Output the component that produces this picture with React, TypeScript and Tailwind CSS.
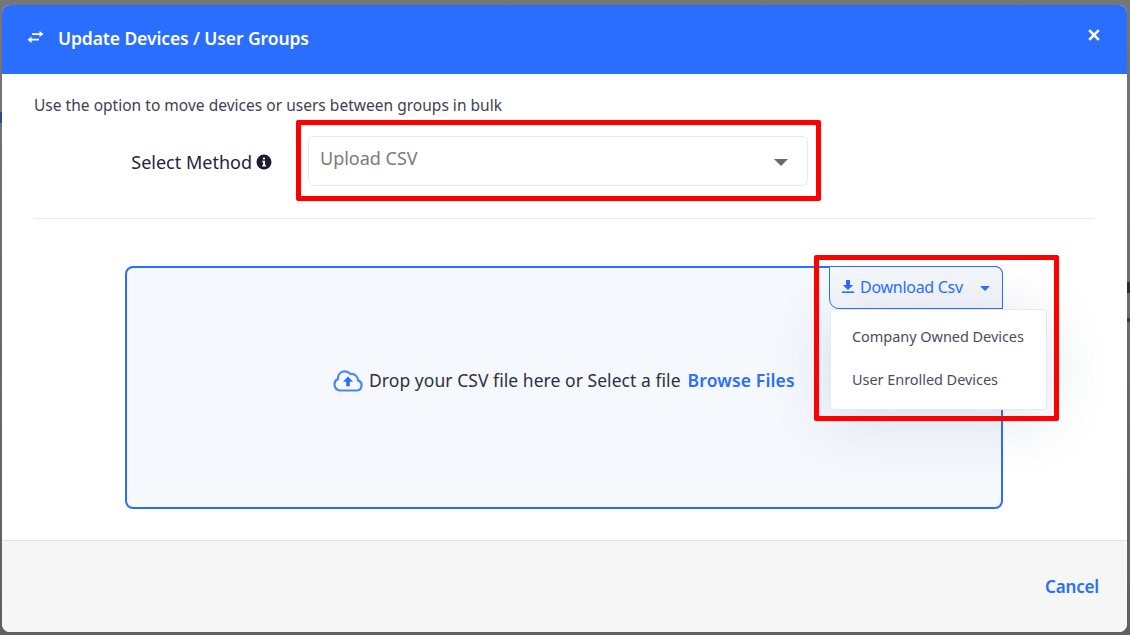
const font = { fontFamily: '"Noto Sans", sans-serif' }

function SwapIcon() {
  return (
    <svg width="17" height="12" viewBox="0 0 17 12" className="text-white">
      <path d="M5 2.2h7.5V0L16.5 3l-4 3V3.9H5z" fill="currentColor" />
      <path d="M12 7.8H4.5V5.6L0.5 8.8l4 3.2V9.6H12z" fill="currentColor" />
    </svg>
  )
}

function CloseIcon() {
  return (
    <svg width="12" height="12" viewBox="0 0 12 12">
      <path d="M1.2 1.2l9.6 9.6M10.8 1.2l-9.6 9.6" stroke="white" strokeWidth="2.6" fill="none" />
    </svg>
  )
}

function CloudIcon() {
  return (
    <svg width="30" height="22" viewBox="0 0 30 22">
      <path
        d="M7 20.5h16.5a5.2 5.2 0 0 0 1.6-10.1A6.6 6.6 0 0 0 17.5 4 8 8 0 0 0 10 1.5a7.2 7.2 0 0 0-5 7.6A6 6 0 0 0 7 20.5z"
        fill="none"
        stroke="#4a86f7"
        strokeWidth="2.2"
      />
      <path d="M15 6.5l5 5.2h-3.2v4.6h-3.6v-4.6H10z" fill="#2a6eff" />
    </svg>
  )
}

function InfoDot() {
  return (
    <svg width="16" height="16" viewBox="0 0 16 16">
      <circle cx="8" cy="8" r="7.5" fill="#1c1c2e" />
      <rect x="6.9" y="3.4" width="2.2" height="2.2" rx="1" fill="white" />
      <path d="M6.3 6.8h2.8v4.4h1v1.4H6.1v-1.4h1V8.2h-.8z" fill="white" />
    </svg>
  )
}

function DownloadIcon() {
  return (
    <svg width="14" height="14" viewBox="0 0 14 14">
      <path d="M5 0h4v5h3.2L7 10 1.8 5H5z" fill="#2a6eff" />
      <rect x="1" y="11.4" width="12" height="1.6" fill="#2a6eff" />
    </svg>
  )
}

function Caret({ className }: { className: string }) {
  return (
    <svg width="14" height="7" viewBox="0 0 14 7" className={className}>
      <path d="M0 0h14L7 7z" fill="currentColor" />
    </svg>
  )
}

export default function App() {
  return (
    <div style={font} className="relative w-[1130px] h-[635px] overflow-hidden bg-gradient-to-b from-[#767676] to-[#606060] pt-[5px] pl-[2px]">
      {/* bits of the page behind the modal, only visible at the edges */}
      <div className="absolute left-0 top-[112px] w-[2px] h-[11px] bg-[#2b4a86]" />
      <div className="absolute right-0 top-[282px] w-[3px] h-[11px] bg-[#2c2c2c]" />
      <div className="absolute right-0 top-[318px] w-[3px] h-[4px] bg-[#3a3a3a]" />

      <div className="relative w-[1125px] h-[627px] flex flex-col rounded-[8px] overflow-hidden bg-white">
        <div className="h-[69px] shrink-0 bg-[#2a6eff] flex items-center pl-[25px] pr-[27px] text-white">
          <span className="mb-[6px]">
            <SwapIcon />
          </span>
          <h1 className="ml-[14px] mb-[2px] text-[17.5px] font-semibold tracking-[-0.1px]">Update Devices / User Groups</h1>
          <div className="ml-auto mb-[10px]">
            <CloseIcon />
          </div>
        </div>

        <div className="flex-1 pl-[32px] pr-[33px] pt-[20px]">
          <p className="text-[15.5px] leading-[22px] tracking-[0.02px] text-[#3f4150]">
            Use the option to move devices or users between groups in bulk
          </p>
          <div className="flex items-start mt-[20px] pb-[32px] border-b border-[#e8e8e8]">
            <div className="w-[274px] h-[50px] flex items-center justify-end pr-[36px] pt-[2px]">
              <span className="text-[18px] text-[#23243a]">Select Method</span>
              <span className="ml-[4px]">
                <InfoDot />
              </span>
            </div>
            <div className="w-[500px] h-[50px] rounded-[6px] border border-[#e3e9f5] flex items-center justify-between pl-[11px] pr-[19px] pb-[5px]">
              <span className="text-[18px] text-[#7b7b7b]">Upload CSV</span>
              <Caret className="text-[#6b6b6b] mt-[7px]" />
            </div>
          </div>

          <div className="relative ml-[91px] mt-[47px] w-[878px] h-[243px] rounded-[8px] border-2 border-[#2a6eff] bg-[#f5f8fd] flex items-center pl-[206px] pb-[14px]">
            <CloudIcon />
            <span className="ml-[6px] text-[17.5px] tracking-[0.05px] text-[#2e3044]">
              Drop your CSV file here or Select a file
            </span>
            <span className="ml-[7px] text-[17.5px] font-semibold tracking-[0.15px] text-[#2a6eff]">Browse Files</span>

            <div className="absolute -top-[2px] -right-[2px] w-[174px] h-[43px] rounded-tr-[8px] rounded-bl-[10px] border border-[#2a6eff] bg-[#f3f6fa] flex items-center pl-[11px] pb-[2px] text-[#2a6eff]">
              <DownloadIcon />
              <span className="ml-[5px] text-[16px] tracking-[-0.28px]">Download Csv</span>
              <Caret className="ml-[17px] mt-[4px] w-[10px] h-[5px]" />
            </div>

            <div className="absolute top-[41px] left-[703px] w-[217px] h-[101px] rounded-[4px] border border-[#e3e9f9] bg-white shadow-[0_10px_60px_rgba(60,80,130,0.16)] flex flex-col text-[14.5px] tracking-[-0.05px] text-[#4a4c5c]">
              <div className="pl-[21px] pt-[15px] h-[43px] leading-[22px]">Company Owned Devices</div>
              <div className="pl-[21px] pt-[15px] h-[43px] leading-[22px]">User Enrolled Devices</div>
            </div>
          </div>
        </div>

        <div className="h-[92px] shrink-0 border-t border-[#e0e0e0] bg-[#f6f6f6] flex items-center justify-end pr-[28px]">
          <span className="text-[17px] font-semibold tracking-[-0.15px] text-[#2a6eff]">Cancel</span>
        </div>
      </div>

      {/* red markup boxes drawn over the shot */}
      <div className="absolute left-[296px] top-[120px] w-[525px] h-[81px] rounded-[2px] border-[5px] border-[#ff0000]" />
      <div className="absolute left-[814px] top-[255px] w-[245px] h-[166px] rounded-[2px] border-[5px] border-[#ff0000]" />
    </div>
  )
}
